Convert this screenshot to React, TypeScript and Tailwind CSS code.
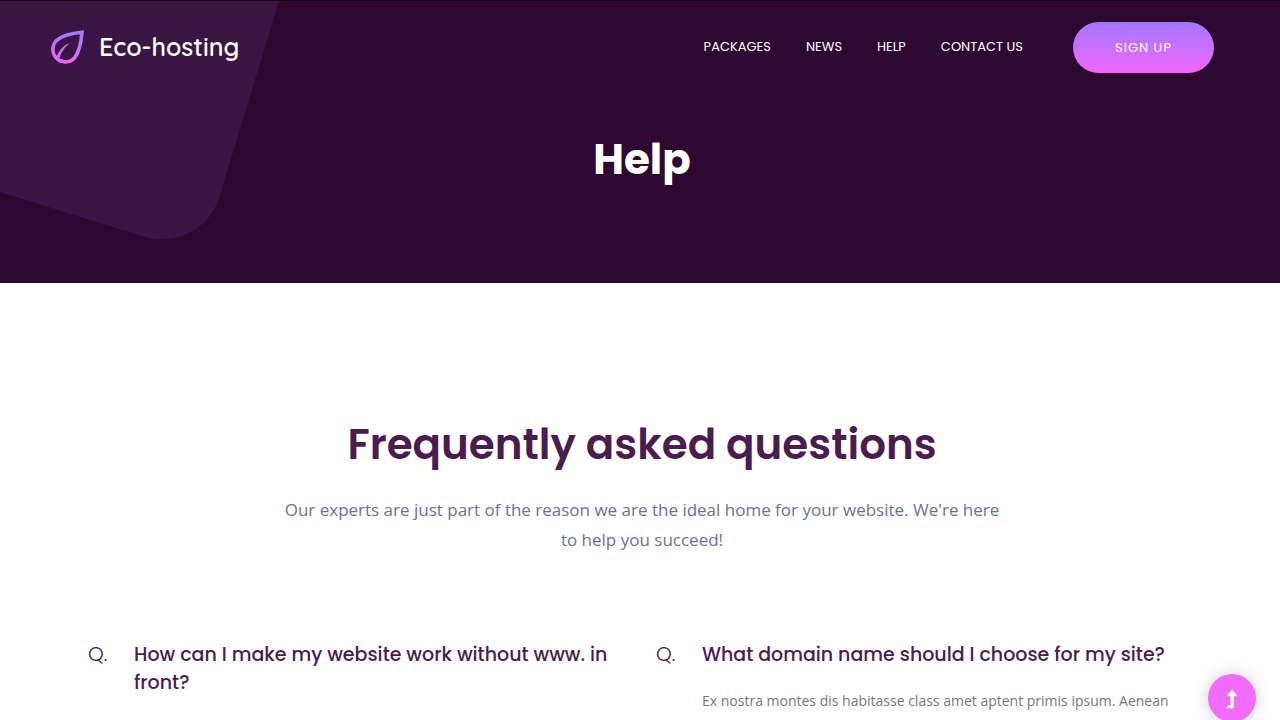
const navItems = ["Packages", "News", "Help", "Contact us"];

function LeafMark() {
  return (
    <svg viewBox="0 0 36 36" className="h-9 w-9" fill="none" aria-hidden="true">
      <defs>
        <linearGradient id="leaf" x1="0" y1="0" x2="0" y2="36" gradientUnits="userSpaceOnUse">
          <stop stopColor="#9b7dff" />
          <stop offset="1" stopColor="#f362fb" />
        </linearGradient>
      </defs>
      <path
        d="M32 3.200C23 4 12 6.500 6.500 11.500C1.500 16.300 1.800 24.800 6.800 29.500C11.800 34.300 20.500 34 25 28.300C29 22.800 31.300 12.500 32 3.200Z"
        stroke="url(#leaf)"
        strokeWidth="3.600"
        strokeLinejoin="miter"
      />
      <path
        d="M19.600 14C13.500 16.500 8.500 21.500 6.400 28.400L9.200 30.500C10.500 24 14 19 19.600 14Z"
        fill="url(#leaf)"
      />
    </svg>
  );
}

function Header() {
  return (
    <header className="relative overflow-hidden border-t border-[#14000f] bg-[#2d0830] pb-[91px] text-white">
      <svg className="absolute left-0 top-0 h-[250px] w-[290px]" viewBox="0 0 290 250" aria-hidden="true">
        <path d="M0 0H279L220 194A60 60 0 0 1 145 236L0 191Z" fill="#3a1645" />
      </svg>
      <div className="relative flex items-center justify-between pl-[50px] pr-[66px] pt-[21px]">
        <a href="#home" className="flex items-center gap-[13px] pb-0.5">
          <LeafMark />
          <span className="font-['Quicksand','Lato',sans-serif] text-[25px] font-semibold leading-8">Eco-hosting</span>
        </a>
        <div className="flex items-center gap-[50px]">
          <nav aria-label="Main" className="flex gap-[35px] pb-0.5">
            {navItems.map((item) => (
              <a key={item} href="#top" className="text-[13px] uppercase leading-5">
                {item}
              </a>
            ))}
          </nav>
          <button
            type="button"
            className="h-[51px] w-[141px] rounded-full bg-linear-to-b from-[#a076ff] to-[#f264fb] text-[13px] tracking-[1px]"
          >
            SIGN UP
          </button>
        </div>
      </div>
      <h1 className="relative pl-1 pt-[55px] text-center text-[42px] font-bold leading-[64px]">Help</h1>
    </header>
  );
}

type QuestionProps = { title: string; answer?: string };

function Question({ title, answer }: QuestionProps) {
  return (
    <article className="grid grid-cols-[46px_1fr]">
      <span className="text-[20px] font-light leading-[26px] text-[#4a1c50]">Q.</span>
      <div>
        <h3 className="text-[19px] font-medium leading-7 text-[#4a1c50]">{title}</h3>
        {answer && (
          <p className="pt-[19px] font-['Open_Sans',sans-serif] text-[14px] leading-[26px] text-[#777777]">{answer}</p>
        )}
      </div>
    </article>
  );
}

export default function App() {
  return (
    <div className="min-h-screen bg-white font-['Poppins','Inter',sans-serif]">
      <Header />
      <main className="px-[88px] pt-[130px]">
        <section className="pl-1 text-center">
          <h2 className="text-[42px] font-semibold leading-[64px] text-[#4a1c50]">Frequently asked questions</h2>
          <p className="mx-auto max-w-[720px] pt-[18px] font-['Open_Sans',sans-serif] text-[17px] leading-[30px] text-[#6b7199]">
            Our experts are just part of the reason we are the ideal home for your website. We're here to help you
            succeed!
          </p>
        </section>
        <section className="grid grid-cols-2 gap-8 pt-[86px]">
          <Question title="How can I make my website work without www. in front?" />
          <Question
            title="What domain name should I choose for my site?"
            answer="Ex nostra montes dis habitasse class amet aptent primis ipsum. Aenean"
          />
        </section>
      </main>
      <a
        href="#top"
        aria-label="Back to top"
        className="fixed -bottom-0.5 right-6 flex h-12 w-12 items-center justify-center rounded-full bg-[#f26bff] text-white shadow-[0_0_16px_rgba(0,0,0,0.2)]"
      >
        <svg viewBox="0 0 16 22" className="mt-0.5 h-[22px] w-4" aria-hidden="true">
          <path
            d="M2.300 19.700 4.600 16.900H6.400V8.300H3.500Q2.600 8 3.200 7.200L7.400 2.300Q8 1.800 8.700 2.300L12.800 7.200Q13.400 8 12.500 8.300H9.700V19.300Q9.700 20.200 8.900 20.200H2.600Q2 20.200 2.300 19.700Z"
            fill="currentColor"
          />
        </svg>
      </a>
    </div>
  );
}
